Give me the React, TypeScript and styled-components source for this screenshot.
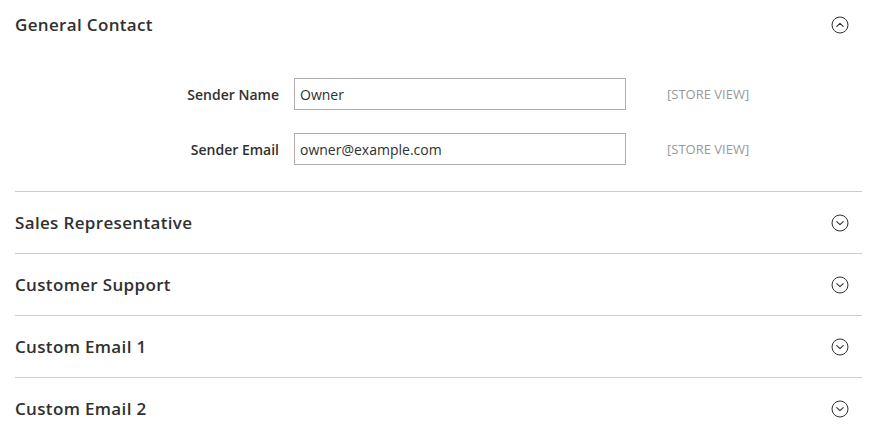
import React from 'react';
import styled, { createGlobalStyle } from 'styled-components';

const GlobalStyle = createGlobalStyle`
  html, body {
    margin: 0;
    padding: 0;
    background: #ffffff;
    font-family: "Open Sans", "Liberation Sans", Arial, sans-serif;
    color: #303030;
  }
`;

const Page = styled.div`
  padding: 0 12px 0 15px;
`;

const Section = styled.div`
  & + & {
    border-top: 1px solid #cccccc;
  }
`;

const Header = styled.div<{ $first?: boolean }>`
  display: flex;
  align-items: center;
  justify-content: space-between;
  padding: ${(p) => (p.$first ? '14px 0 14px 0' : '20px 0 19px 0')};
  cursor: pointer;
`;

const Title = styled.span`
  font-size: 17px;
  font-weight: 600;
  line-height: 22px;
  color: #303030;
  letter-spacing: 0.02em;
`;

const Toggle = styled.span`
  display: flex;
  width: 18px;
  height: 18px;
  margin-right: 13px;
  color: #303030;
`;

const Fieldset = styled.div`
  padding: 28px 0 26px;
  display: flex;
  flex-direction: column;
  gap: 23px;
`;

const Row = styled.div`
  display: grid;
  grid-template-columns: 264px 332px auto;
  column-gap: 15px;
  align-items: center;
`;

const Label = styled.label`
  text-align: right;
  font-size: 14px;
  font-weight: 600;
  color: #303030;
`;

const Input = styled.input`
  box-sizing: border-box;
  width: 332px;
  height: 32px;
  border: 1px solid #adadad;
  padding: 0 5px;
  font-family: inherit;
  font-size: 14px;
  color: #303030;
  outline: none;
`;

const Scope = styled.span`
  margin-left: 26px;
  font-size: 13px;
  color: #999999;
  text-transform: uppercase;
`;

function ToggleIcon({ open }: { open: boolean }) {
  return (
    <Toggle>
      <svg width="18" height="18" viewBox="0 0 18 18" fill="none">
        <circle cx="9" cy="9" r="8" stroke="currentColor" strokeWidth="1" />
        <path
          d={open ? 'M5.8 10.3 L9 7.3 L12.2 10.3' : 'M5.8 7.7 L9 10.7 L12.2 7.7'}
          stroke="currentColor"
          strokeWidth="1.1"
          strokeLinecap="round"
          strokeLinejoin="round"
        />
      </svg>
    </Toggle>
  );
}

const fields = [
  { label: 'Sender Name', value: 'Owner' },
  { label: 'Sender Email', value: 'owner@example.com' },
];

const closed = ['Sales Representative', 'Customer Support', 'Custom Email 1', 'Custom Email 2'];

export default function App() {
  return (
    <>
      <GlobalStyle />
      <Page>
        <Section>
          <Header $first>
            <Title>General Contact</Title>
            <ToggleIcon open />
          </Header>
          <Fieldset>
            {fields.map((f) => (
              <Row key={f.label}>
                <Label>{f.label}</Label>
                <Input defaultValue={f.value} />
                <Scope>[Store View]</Scope>
              </Row>
            ))}
          </Fieldset>
        </Section>
        {closed.map((t) => (
          <Section key={t}>
            <Header>
              <Title>{t}</Title>
              <ToggleIcon open={false} />
            </Header>
          </Section>
        ))}
      </Page>
    </>
  );
}
